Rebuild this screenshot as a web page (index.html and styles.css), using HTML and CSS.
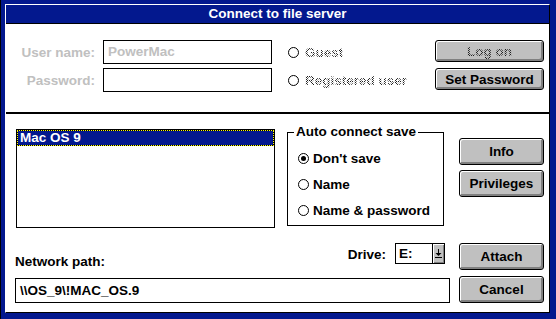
FILE: index.html
```html
<!DOCTYPE html>
<html lang="en">
<head>
  <meta charset="UTF-8">
  <title>Connect to file server</title>
  <link rel="stylesheet" href="styles.css">
</head>
<body>
  <div class="window">
    <div class="dialog">
      <div class="titlebar">Connect to file server</div>

      <!-- login part, everything here is disabled except the password -->
      <div class="login">
        <span class="field-label off">User name:</span>
        <div class="textbox off">PowerMac</div>
        <div class="option top-option"><span class="radio"></span><span class="dither">Guest</span></div>
        <button class="btn btn-sm"><span class="dither">Log on</span></button>

        <span class="field-label off">Password:</span>
        <div class="textbox"></div>
        <div class="option top-option"><span class="radio"></span><span class="dither">Registered user</span></div>
        <button class="btn btn-sm">Set Password</button>
      </div>

      <div class="server">
        <div class="server-main">
          <div class="listbox">
            <div class="list-item">Mac OS 9</div>
          </div>
          <div class="group">
            <div class="group-title">Auto connect save</div>
            <div class="group-options">
              <div class="option"><span class="radio checked"></span>Don't save</div>
              <div class="option"><span class="radio"></span>Name</div>
              <div class="option"><span class="radio"></span>Name &amp; password</div>
            </div>
          </div>
        </div>
        <div class="side-buttons">
          <button class="btn">Info</button>
          <button class="btn">Privileges</button>
        </div>

        <div class="path-row">
          <span class="path-label">Network path:</span>
          <span class="drive-label">Drive:</span>
          <div class="combo">
            <span class="combo-value">E:</span>
            <span class="combo-btn">
              <svg width="7" height="9" viewBox="0 0 7 9">
                <rect x="3" y="0" width="1" height="4" fill="#000"/>
                <polygon points="0.5,4 6.5,4 3.5,7" fill="#000"/>
                <rect x="0" y="8" width="7" height="1" fill="#000"/>
              </svg>
            </span>
          </div>
        </div>
        <button class="btn btn-end">Attach</button>

        <div class="textbox path">\\OS_9\!MAC_OS.9</div>
        <button class="btn btn-end">Cancel</button>
      </div>
    </div>
  </div>
</body>
</html>
```

FILE: styles.css
```css
* {
  box-sizing: border-box;
}
body {
  margin: 0;
  font: bold 13.5px "Liberation Sans", Arial, sans-serif;
  color: #000;
}
.window {
  width: 556px;
  height: 319px;
  background-color: #03188e;
  border-left: 1px solid #000;
  padding: 4px 6px 6px 4px;
}
.dialog {
  height: 100%;
  display: flex;
  flex-direction: column;
  background-color: #fff;
  border-top: 1px solid #fff;
  border-left: 1px solid #fff;
  border-right: 1px solid #000;
  border-bottom: 1px solid #000;
}
.titlebar {
  height: 19px;
  background-color: #03188e;
  border-bottom: 1px solid #000;
  color: #fff;
  text-align: center;
  line-height: 18px;
}

/* top: user / password */
.login {
  height: 90px;
  border-bottom: 2px solid #000;
  display: grid;
  grid-template-columns: 97px 185px 147px 109px;
  grid-template-rows: 24px 24px;
  row-gap: 4px;
  align-items: center;
  padding-top: 16px;
}
.field-label {
  text-align: right;
  padding-right: 8px;
}
.off {
  color: #c0c0c0;
}
.textbox {
  width: 169px;
  height: 24px;
  border: 1px solid #000;
  background: #fff;
  padding-left: 4px;
  line-height: 22px;
  white-space: nowrap;
}
.dither {
  color: transparent;
  background-image: repeating-conic-gradient(#202020 0 25%, transparent 0 50%);
  background-size: 2px 2px;
  -webkit-background-clip: text;
  background-clip: text;
}

/* radios */
.option {
  display: flex;
  align-items: center;
  gap: 4px;
  height: 26px;
}
.top-option {
  gap: 6px;
  height: auto;
}
.radio {
  width: 11px;
  height: 11px;
  border: 1px solid #000;
  border-radius: 50%;
  background: #fff;
  display: flex;
  align-items: center;
  justify-content: center;
  flex-shrink: 0;
}
.radio.checked::after {
  content: "";
  width: 5px;
  height: 5px;
  border-radius: 50%;
  background: #000;
}

/* buttons */
.btn {
  font: inherit;
  color: #000;
  width: 85px;
  height: 27px;
  padding: 0;
  background-color: #c0c0c0;
  border: 1px solid #000;
  border-radius: 3px;
  box-shadow: inset 1px 1px 0 #fff, inset -2px -2px 0 #808080;
}
.btn-sm {
  width: 109px;
  height: 22px;
  align-self: start;
}
.btn-end {
  align-self: end;
}

/* bottom: server list */
.server {
  flex: 1;
  display: grid;
  grid-template-columns: 438px 85px;
  grid-template-rows: 114px 42px 33px;
  column-gap: 6px;
  padding-left: 9px;
}
.server-main {
  display: flex;
  align-items: flex-start;
}
.listbox {
  width: 259px;
  height: 99px;
  margin: 15px 0 0 1px;
  border: 1px solid #000;
}
.list-item {
  height: 16px;
  border: 1px dotted #ffff00;
  background: linear-gradient(#03188e, #03188e) padding-box, #000 border-box;
  color: #fff;
  line-height: 14px;
  padding-left: 2px;
}
.group {
  width: 157px;
  height: 94px;
  margin: 18px 0 0 12px;
  border: 1px solid #000;
}
.group-title {
  width: fit-content;
  margin: -9px 0 0 6px;
  padding: 0 2px;
  background: #fff;
  line-height: 16px;
}
.group-options {
  margin-top: 5px;
  padding-left: 10px;
}
.side-buttons {
  display: flex;
  flex-direction: column;
  gap: 5px;
  padding-top: 24px;
}
.path-row {
  align-self: end;
  height: 27px;
  display: flex;
  align-items: center;
}
.path-label {
  align-self: flex-end;
  line-height: 16px;
}
.drive-label {
  margin-left: auto;
  margin-right: 9px;
  margin-top: -4px;
}
.combo {
  width: 50px;
  height: 21px;
  margin: -6px 8px 0 0;
  border: 1px solid #000;
  display: flex;
}
.combo-value {
  flex: 1;
  padding-left: 3px;
  line-height: 19px;
}
.combo-btn {
  width: 12px;
  border-left: 1px solid #000;
  background: #c0c0c0;
  box-shadow: inset 1px 1px 0 #fff, inset -1px -1px 0 #808080;
  display: flex;
  align-items: center;
  justify-content: center;
}
.textbox.path {
  width: 435px;
  height: 25px;
  align-self: end;
  line-height: 23px;
}
```
